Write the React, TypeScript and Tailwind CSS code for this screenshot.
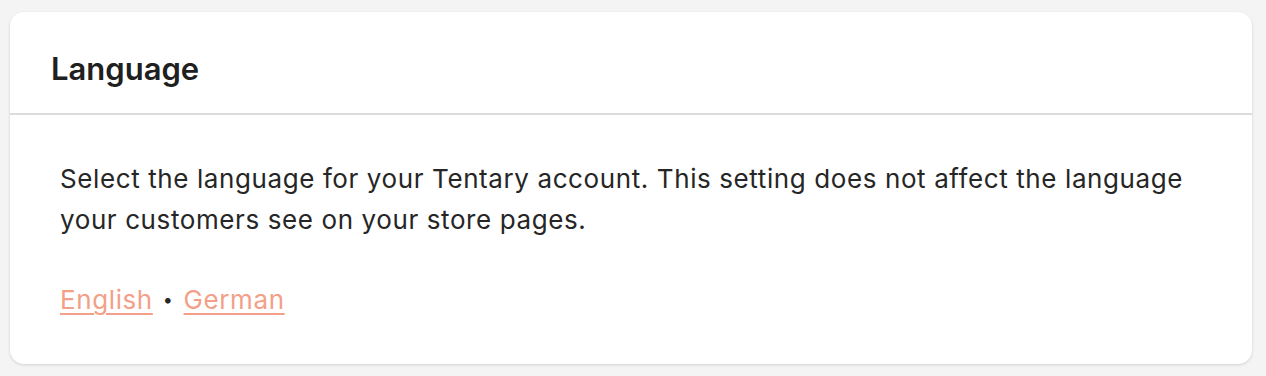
export default function App() {
  return (
    <div className="min-h-screen bg-[#f4f4f4] pt-3 pl-2.5 pr-3.5 font-['Inter',sans-serif]">
      <section className="rounded-[14px] bg-white shadow-[0_1px_3px_rgba(0,0,0,0.15)]">
        <header className="h-[103px] pt-[40px] px-[41px] border-b-2 border-[#dcdcdc]">
          <h2 className="text-[31px] leading-[34px] font-semibold text-[#202020]">Language</h2>
        </header>
        <div className="px-[50px] pt-[43px] pb-[44px]">
          <p className="text-[26px] leading-[41px] tracking-[0.6px] text-[#262626]">
            Select the language for your Tentary account. This setting does not affect the language your customers see on your store pages.
          </p>
          <div className="mt-[39px] flex items-center gap-2.5 text-[26px] leading-[41px] tracking-[0.6px]">
            <a href="#" className="text-[#f3a088] underline decoration-[1.5px] underline-offset-[4px]">English</a>
            <span className="text-[#262626] text-[18px]">•</span>
            <a href="#" className="text-[#f3a088] underline decoration-[1.5px] underline-offset-[4px]">German</a>
          </div>
        </div>
      </section>
    </div>
  );
}
